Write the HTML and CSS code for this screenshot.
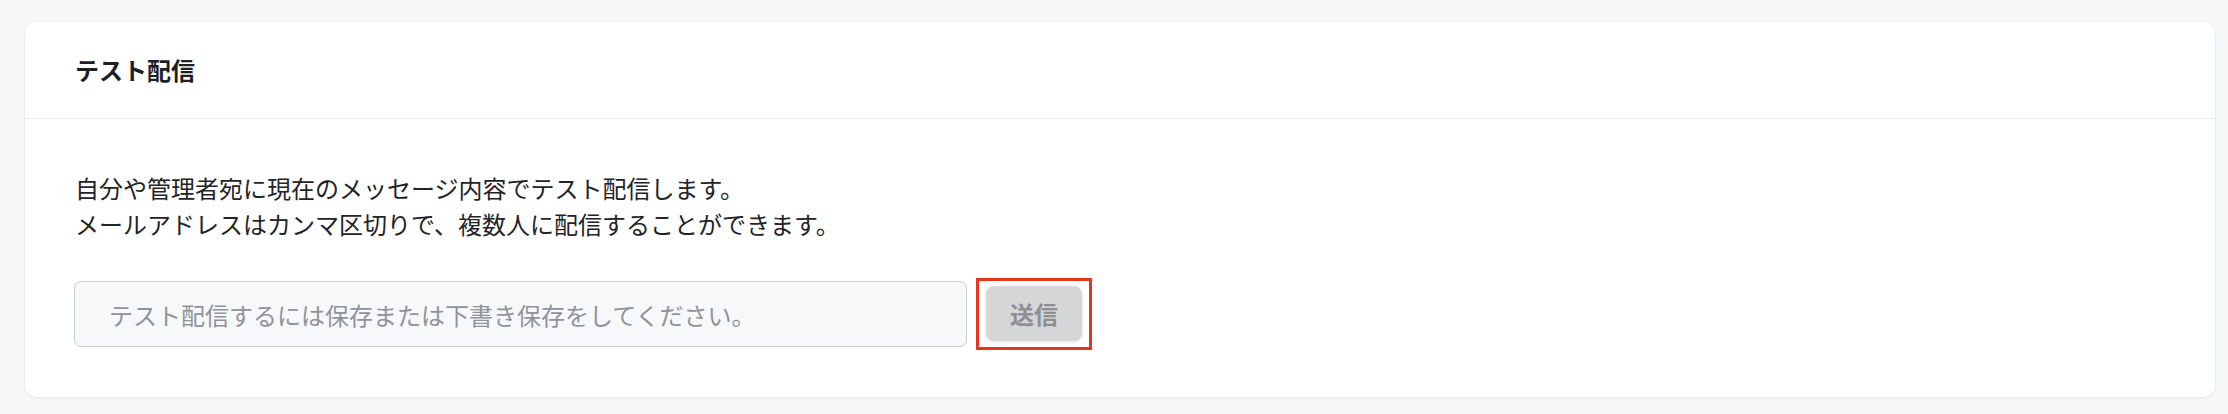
FILE: index.html
```html
<!DOCTYPE html>
<html lang="ja">
<head>
<meta charset="utf-8">
<title>テスト配信</title>
<link rel="stylesheet" href="styles.css">
</head>
<body>
  <section class="card">
    <header class="card-header">
      <h2 class="card-title">テスト配信</h2>
    </header>
    <div class="card-body">
      <p class="desc">自分や管理者宛に現在のメッセージ内容でテスト配信します。<br>メールアドレスはカンマ区切りで、複数人に配信することができます。</p>
      <div class="send-row">
        <input class="send-input" type="text" placeholder="テスト配信するには保存または下書き保存をしてください。" disabled>
        <div class="highlight">
          <button class="send-btn" type="button" disabled>送信</button>
        </div>
      </div>
    </div>
  </section>
</body>
</html>
```
FILE: styles.css
```css
html, body {
  margin: 0;
  padding: 0;
}
body {
  background: #f6f7f9;
  padding: 22px 13px 17px 25px;
  font-family: "Noto Sans CJK JP", "Noto Sans", sans-serif;
  color: #222428;
}
.card {
  background: #ffffff;
  border-radius: 12px;
  box-shadow: 0 1px 3px rgba(0, 0, 0, 0.07), 0 0 0 1px rgba(0, 0, 0, 0.02);
  height: 375px;
  box-sizing: border-box;
}
.card-header {
  padding: 0 49px 0 50px;
  height: 96px;
  display: flex;
  align-items: center;
  border-bottom: 1px solid #ececee;
}
.card-title {
  margin: 0;
  font-size: 24px;
  font-weight: 700;
  line-height: 36px;
  color: #1c1f26;
}
.card-body {
  padding: 51px 49px 0 49px;
}
.desc {
  margin: 0 0 0 1px;
  font-size: 24px;
  line-height: 36px;
  color: #222428;
}
.send-row {
  margin-top: 36px;
  display: flex;
  align-items: center;
  gap: 9px;
}
.send-input {
  width: 893px;
  height: 66px;
  box-sizing: border-box;
  padding: 0 34px;
  border: 1.5px solid #c9ccd2;
  border-radius: 7px;
  background: #f7f8fa;
  font-family: inherit;
  font-size: 24px;
  color: #8b8f97;
}
.send-input::placeholder {
  color: #8f939b;
}
.highlight {
  border: 3px solid #e8341c;
  padding: 5px 7px 6px 7px;
  display: flex;
}
.send-btn {
  width: 96px;
  height: 55px;
  border: none;
  border-radius: 8px;
  background: #d5d6d8;
  box-shadow: 0 1px 3px rgba(0, 0, 0, 0.12);
  font-family: inherit;
  font-size: 24px;
  font-weight: 700;
  color: #8e8f91;
  padding: 0;
}
```
